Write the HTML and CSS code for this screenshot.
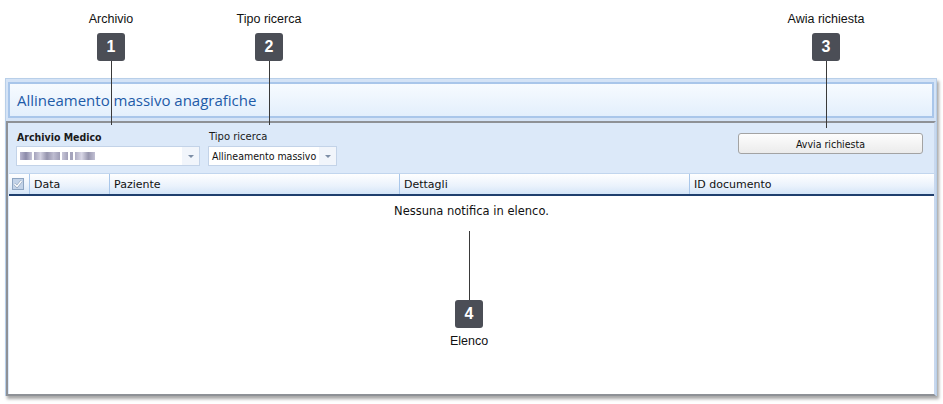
FILE: index.html
```html
<!DOCTYPE html>
<html lang="it">
<head>
    <meta charset="UTF-8">
    <title>Allineamento massivo anagrafiche</title>
    <link rel="stylesheet" href="styles.css">
</head>
<body>
    <div class="stage">
        <div class="window">
            <div class="title-bar">Allineamento massivo anagrafiche</div>
            <div class="panel">
                <div class="filters">
                    <div class="field">
                        <label class="bold">Archivio Medico</label>
                        <div class="combo combo-wide">
                            <span class="blurred">
                                <i class="b1"></i><i class="b2"></i><i class="b3"></i><i class="b4"></i><i class="b5"></i>
                            </span>
                            <span class="arrow"></span>
                        </div>
                    </div>
                    <div class="field">
                        <label>Tipo ricerca</label>
                        <div class="combo combo-small">
                            <span class="value">Allineamento massivo</span>
                            <span class="arrow"></span>
                        </div>
                    </div>
                    <button class="btn">Avvia richiesta</button>
                </div>
                <div class="grid">
                    <div class="grid-head">
                        <div class="col col-check"><span class="check">
                            <svg width="12" height="12" viewBox="0 0 12 12"><rect x="0.5" y="0.5" width="11" height="11" fill="#c3d3e8" stroke="#8ea5c2"/><path d="M2.5 6 L5 8.5 L9.5 3" fill="none" stroke="#7f93ad" stroke-width="2.4"/><path d="M2.5 6 L5 8.5 L9.5 3" fill="none" stroke="#ffffff" stroke-width="1.5"/></svg>
                        </span></div>
                        <div class="col col-data">Data</div>
                        <div class="col col-paz">Paziente</div>
                        <div class="col col-det">Dettagli</div>
                        <div class="col col-id">ID documento</div>
                    </div>
                    <div class="grid-body">Nessuna notifica in elenco.</div>
                </div>
            </div>
        </div>

        <!-- callouts -->
        <div class="callout c1">
            <div class="callout-label">Archivio</div>
            <div class="badge">1</div>
            <div class="leader" style="height: 64px"></div>
        </div>
        <div class="callout c2">
            <div class="callout-label">Tipo ricerca</div>
            <div class="badge">2</div>
            <div class="leader" style="height: 64px"></div>
        </div>
        <div class="callout c3">
            <div class="callout-label">Awia richiesta</div>
            <div class="badge">3</div>
            <div class="leader" style="height: 67px"></div>
        </div>
        <div class="callout c4">
            <div class="leader" style="height: 69px"></div>
            <div class="badge">4</div>
            <div class="callout-label below">Elenco</div>
        </div>
    </div>
</body>
</html>
```

FILE: styles.css
```css
body {
    margin: 0;
    background: #fff;
    font-family: 'Liberation Sans', Arial, sans-serif;
}
.stage {
    position: relative;
    width: 943px;
    height: 404px;
    overflow: hidden;
    padding-top: 78px;
    box-sizing: border-box;
}
.window {
    margin-left: 5px;
    width: 932px;
    height: 318px;
    box-sizing: border-box;
    background: #d4e3f6;
    border: 1px solid #b8cfe9;
    border-bottom: none;
    box-shadow: 2px 3px 3px rgba(0, 0, 0, 0.35);
    display: flex;
    flex-direction: column;
}
.title-bar {
    margin: 3px 2px 0 2px;
    height: 36px;
    box-sizing: border-box;
    border: 2px solid #a9c6ea;
    background: linear-gradient(to bottom, #f7fbff, #e3effc);
    color: #1e5ba8;
    font-family: 'Open Sans', sans-serif;
    font-size: 15px;
    padding-left: 7px;
    display: flex;
    align-items: center;
}
.panel {
    flex: 1;
    margin-top: 3px;
    border-top: 2px solid #8e9196;
    border-left: 2px solid #8e9196;
    border-right: 2px solid #c8d8ee;
    border-bottom: 2px solid #8e9196;
    background: #dce9f9;
    display: flex;
    flex-direction: column;
}
.filters {
    display: flex;
    align-items: flex-start;
    height: 50px;
    padding: 8px 0 0 8px;
    box-sizing: border-box;
    gap: 8px;
    font-family: 'DejaVu Sans', sans-serif;
    font-size: 10px;
    color: #1a1a1a;
}
.field label {
    display: block;
    height: 15px;
    padding-left: 1px;
}
.field label.bold {
    font-weight: bold;
    font-family: 'DejaVu Sans Condensed', 'DejaVu Sans', sans-serif;
    font-size: 10.5px;
}
.combo {
    height: 20px;
    box-sizing: border-box;
    background: #fff;
    border: 1px solid #c3d3e8;
    display: flex;
    align-items: center;
    position: relative;
}
.combo-wide {
    width: 184px;
}
.combo-small {
    width: 129px;
}
.combo .value {
    padding-left: 3px;
    font-family: 'DejaVu Sans Condensed', 'DejaVu Sans', sans-serif;
    font-size: 10.5px;
    color: #111;
}
.blurred {
    margin-left: 3px;
    display: flex;
    align-items: center;
    gap: 2px;
    height: 8px;
}
.blurred i {
    display: block;
    height: 8px;
    opacity: 0.8;
}
.blurred .b1 { width: 12px; background: linear-gradient(to right, #a7a4c4, #6f6d93, #b8b6cf); }
.blurred .b2 { width: 26px; background: linear-gradient(to right, #8e8cab, #c7c5d9, #7b7998, #aeacc5, #8684a3); }
.blurred .b3 { width: 6px; background: linear-gradient(to right, #bbb9cf, #8a88a6); }
.blurred .b4 { width: 3px; background: #8f8dab; }
.blurred .b5 { width: 20px; background: linear-gradient(to right, #9a98b4, #cfcde0, #7e7c9a, #b2b0c8); }
.arrow {
    position: absolute;
    right: 0;
    top: 0;
    bottom: 0;
    width: 17px;
    background: #f1f5fb;
}
.arrow::after {
    content: "";
    position: absolute;
    left: 6px;
    top: 8px;
    border-left: 3px solid transparent;
    border-right: 3px solid transparent;
    border-top: 3px solid #7d8ea6;
}
.btn {
    margin-left: auto;
    margin-right: 11px;
    margin-top: 2px;
    width: 185px;
    height: 21px;
    border: 1px solid #a3a3a3;
    border-radius: 3px;
    background: linear-gradient(to bottom, #fdfdfd, #ebebeb);
    font-family: 'DejaVu Sans Condensed', 'DejaVu Sans', sans-serif;
    font-size: 10.5px;
    color: #111;
    padding: 0;
}
.grid {
    flex: 1;
    margin: 0 0 0 1px;
    width: 925px;
    background: #fff;
    display: flex;
    flex-direction: column;
}
.grid-head {
    display: flex;
    height: 23px;
    box-sizing: border-box;
    background: linear-gradient(to bottom, #ffffff, #eaf2fc 60%, #d4e5f8);
    border-bottom: 2px solid #1f3f6e;
    border-top: 1px solid #c2d6ee;
    font-family: 'DejaVu Sans', sans-serif;
    font-size: 11px;
    color: #111;
}
.col {
    display: flex;
    align-items: center;
    padding-left: 4px;
    box-sizing: border-box;
    border-left: 1px solid #a9c7ea;
}
.col-check {
    width: 20px;
    border-left: none;
    padding-left: 3px;
}
.check svg {
    display: block;
}
.col-data { width: 80px; }
.col-paz { width: 290px; }
.col-det { width: 290px; }
.col-id { flex: 1; }
.grid-body {
    text-align: center;
    padding-top: 8px;
    font-family: 'DejaVu Sans', sans-serif;
    font-size: 11.5px;
    color: #111;
}

/* callouts */
.callout {
    position: absolute;
    width: 100px;
    display: flex;
    flex-direction: column;
    align-items: center;
}
.callout-label {
    font-size: 12.5px;
    color: #111;
    height: 15px;
    line-height: 15px;
    margin-bottom: 6px;
}
.callout-label.below {
    margin: 6px 0 0 0;
}
.badge {
    width: 28px;
    height: 28px;
    border-radius: 3px;
    background: #4b4e56;
    color: #fff;
    font-weight: bold;
    font-size: 16px;
    display: flex;
    align-items: center;
    justify-content: center;
}
.leader {
    width: 1px;
    background: #3a3a3a;
}
.c1 { left: 61px; top: 12px; }
.c2 { left: 219px; top: 12px; }
.c3 { left: 776px; top: 12px; }
.c4 { left: 419px; top: 231px; }
```
